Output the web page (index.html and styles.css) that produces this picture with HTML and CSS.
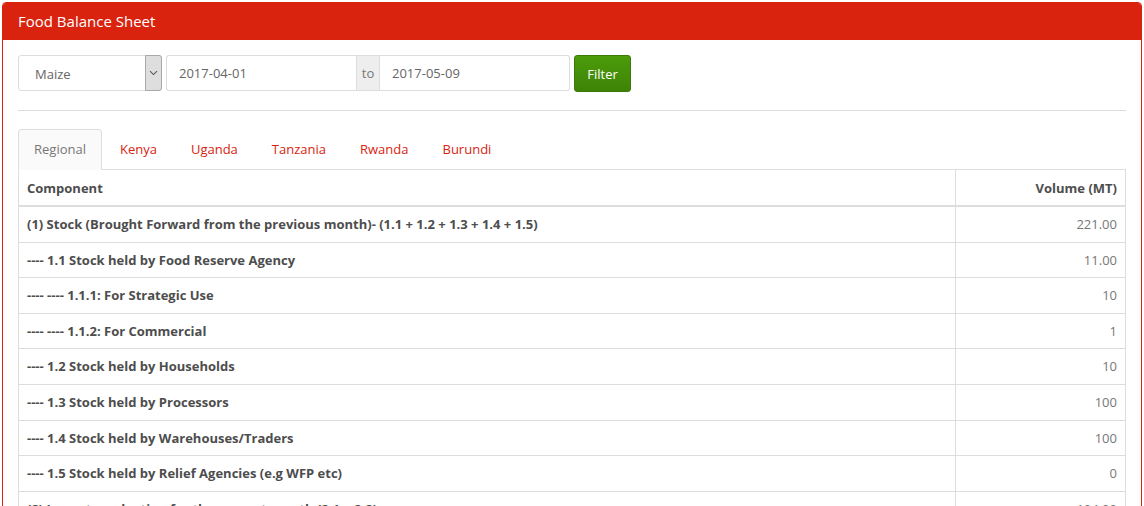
FILE: index.html
```html
<!DOCTYPE html>
<html>
<head>
<meta charset="utf-8">
<link rel="stylesheet" href="styles.css">
</head>
<body>
<div class="page">
  <div class="panel">
    <div class="panel-heading">Food Balance Sheet</div>
    <div class="panel-body">
      <div class="filters">
        <div class="select">
          <span class="select-value">Maize</span>
          <span class="select-arrow"><svg width="9" height="6" viewBox="0 0 9 6"><path d="M1 1.2 L4.5 4.6 L8 1.2" fill="none" stroke="#555" stroke-width="1.1"/></svg></span>
        </div>
        <div class="input-group">
          <div class="input">2017-04-01</div>
          <div class="addon">to</div>
          <div class="input">2017-05-09</div>
        </div>
        <button class="btn">Filter</button>
      </div>
      <hr class="divider">
      <ul class="tabs">
        <li class="tab active">Regional</li>
        <li class="tab">Kenya</li>
        <li class="tab">Uganda</li>
        <li class="tab">Tanzania</li>
        <li class="tab">Rwanda</li>
        <li class="tab">Burundi</li>
      </ul>
      <table class="table">
        <thead>
          <tr><th>Component</th><th class="num vol">Volume (MT)</th></tr>
        </thead>
        <tbody>
          <tr><td>(1) Stock (Brought Forward from the previous month)- (1.1 + 1.2 + 1.3 + 1.4 + 1.5)</td><td class="num">221.00</td></tr>
          <tr><td>---- 1.1 Stock held by Food Reserve Agency</td><td class="num">11.00</td></tr>
          <tr><td>---- ---- 1.1.1: For Strategic Use</td><td class="num">10</td></tr>
          <tr><td>---- ---- 1.1.2: For Commercial</td><td class="num">1</td></tr>
          <tr><td>---- 1.2 Stock held by Households</td><td class="num">10</td></tr>
          <tr><td>---- 1.3 Stock held by Processors</td><td class="num">100</td></tr>
          <tr><td>---- 1.4 Stock held by Warehouses/Traders</td><td class="num">100</td></tr>
          <tr><td>---- 1.5 Stock held by Relief Agencies (e.g WFP etc)</td><td class="num">0</td></tr>
          <tr><td>(2) Import production for the current month (2.1 + 2.2)</td><td class="num">104.00</td></tr>
          <tr><td>---- 2.1 Production by Smallholders</td><td class="num">100</td></tr>
        </tbody>
      </table>
    </div>
  </div>
</div>
</body>
</html>
```

FILE: styles.css
```css
html, body {
  margin: 0;
  padding: 0;
  background: #fff;
  font-family: "Open Sans", "Liberation Sans", sans-serif;
  font-size: 13px;
  line-height: 1.42857;
  color: #777;
}
.page {
  padding: 2px;
}
.panel {
  border: 1px solid #d9230f;
  border-radius: 4px;
  background: #fff;
}
.panel-heading {
  background: #d9230f;
  color: #fff;
  font-size: 15px;
  line-height: 17px;
  padding: 10px 15px 10px 15px;
  height: 17px;
  border-top-left-radius: 3px;
  border-top-right-radius: 3px;
}
.panel-body {
  padding: 15px;
}
.filters {
  display: flex;
  align-items: flex-start;
  gap: 4px;
}
.select {
  width: 142px;
  height: 34px;
  border: 1px solid #ddd;
  border-radius: 3px;
  display: flex;
  align-items: stretch;
  box-sizing: content-box;
}
.select-value {
  flex: 1;
  padding-left: 16px;
  line-height: 36px;
  color: #666;
}
.select-arrow {
  width: 15px;
  background: #dedede;
  border: 1px solid #a9a9a9;
  margin: -1px -1px -1px 0;
  display: flex;
  align-items: center;
  justify-content: center;
  border-radius: 0 3px 3px 0;
}
.input-group {
  display: flex;
  height: 36px;
}
.input {
  width: 165px;
  border: 1px solid #ddd;
  padding: 0 12px;
  line-height: 34px;
  color: #666;
  background: #fff;
}
.input-group .input:first-child {
  border-radius: 3px 0 0 3px;
  border-right: 0;
}
.input-group .input:last-child {
  border-radius: 0 3px 3px 0;
  border-left: 0;
}
.addon {
  width: 22px;
  background: #eee;
  border: 1px solid #ddd;
  text-align: center;
  line-height: 34px;
  color: #777;
}
.btn {
  font-family: inherit;
  font-size: 13px;
  color: #fff;
  height: 37px;
  width: 57px;
  padding: 0;
  border: 1px solid #3a7a07;
  border-radius: 3px;
  background: linear-gradient(#4c9c0b, #3e8306);
  cursor: pointer;
}
.divider {
  border: 0;
  border-top: 1px solid #ddd;
  margin: 18px 0 18px 0;
}
.tabs {
  list-style: none;
  margin: 0;
  padding: 0;
  display: flex;
  border-bottom: 1px solid #ddd;
}
.tab {
  padding: 10px 15px;
  margin-right: 2px;
  margin-bottom: -1px;
  border: 1px solid transparent;
  border-radius: 4px 4px 0 0;
  color: #d9230f;
  line-height: 18.6px;
}
.tab.active {
  color: #777;
  background: #fafafa;
  border-color: #ddd;
  border-bottom-color: #fafafa;
}
.table {
  width: 100%;
  border-collapse: collapse;
  border: 1px solid #ddd;
  border-top: 0;
}
.table th, .table td {
  border: 1px solid #ddd;
  padding: 8px;
  text-align: left;
  line-height: 18.57px;
  font-weight: bold;
  color: #4d4d4d;
}
.table thead th {
  border-top: 0;
  border-bottom: 2px solid #ddd;
  padding-top: 9px;
}
.table .num {
  text-align: right;
  font-weight: normal;
  color: #777;
}
.table th.num {
  font-weight: bold;
  color: #4d4d4d;
}
.vol {
  width: 153px;
}
```
